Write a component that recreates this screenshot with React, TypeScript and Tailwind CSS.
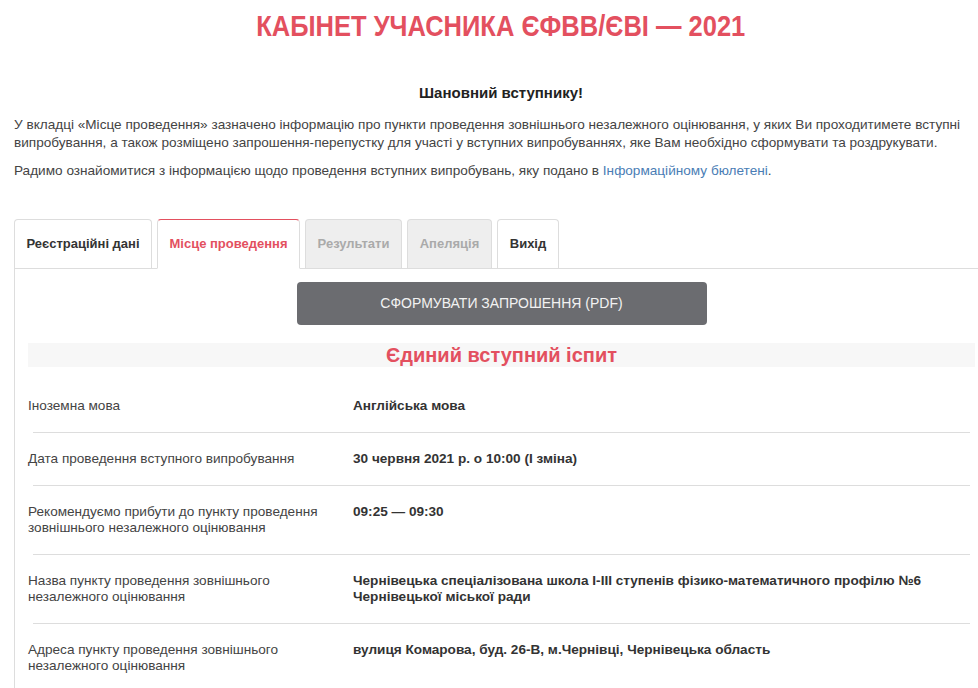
import React from "react";

const font = { fontFamily: "'Liberation Sans', Arial, sans-serif" };

const tabs = [
  { label: "Реєстраційні дані", state: "normal", w: "w-[138px]" },
  { label: "Місце проведення", state: "active", w: "w-[143px]" },
  { label: "Результати", state: "disabled", w: "w-[97px]" },
  { label: "Апеляція", state: "disabled", w: "w-[85px]" },
  { label: "Вихід", state: "normal", w: "w-[62px]" },
];

const rows: { label: string; value: string }[] = [
  { label: "Іноземна мова", value: "Англійська мова" },
  { label: "Дата проведення вступного випробування", value: "30 червня 2021 р. о 10:00 (I зміна)" },
  {
    label: "Рекомендуємо прибути до пункту проведення зовнішнього незалежного оцінювання",
    value: "09:25 — 09:30",
  },
  {
    label: "Назва пункту проведення зовнішнього незалежного оцінювання",
    value: "Чернівецька спеціалізована школа I-III ступенів фізико-математичного профілю №6 Чернівецької міської ради",
  },
  {
    label: "Адреса пункту проведення зовнішнього незалежного оцінювання",
    value: "вулиця Комарова, буд. 26-В, м.Чернівці, Чернівецька область",
  },
];

function Tab({ label, state, w }: { label: string; state: string; w: string }) {
  if (state === "active") {
    return (
      <div
        className={`${w} h-[50px] -mb-px flex items-center justify-center rounded-t-[4px] border border-[#ddd] border-t-[#e3505f] border-b-white bg-white text-[13px] font-bold text-[#e3505f]`}
      >
        {label}
      </div>
    );
  }
  if (state === "disabled") {
    return (
      <div
        className={`${w} h-[49px] flex items-center justify-center rounded-t-[4px] border border-b-0 border-[#ddd] bg-[#eee] text-[13px] font-bold text-[#aaa]`}
      >
        {label}
      </div>
    );
  }
  return (
    <div
      className={`${w} h-[49px] flex items-center justify-center rounded-t-[4px] border border-b-0 border-[#ddd] bg-white text-[13px] font-bold text-[#333]`}
    >
      {label}
    </div>
  );
}

export default function App() {
  return (
    <div className="w-[978px] h-[688px] overflow-hidden bg-white" style={font}>
      <div className="w-[988px] pl-[14px]">
        <div className="mt-[9px] flex justify-center">
          <h1 className="inline-block scale-x-[0.85] text-[30px] leading-[34px] font-bold text-[#e3505f] whitespace-nowrap">
            КАБІНЕТ УЧАСНИКА ЄФВВ/ЄВІ — 2021
          </h1>
        </div>

        <p className="mt-[40px] text-center text-[15px] leading-[20px] font-bold text-[#222]">
          Шановний вступнику!
        </p>

        <p className="mt-[13px] text-[13.6px] leading-[18px] text-[#444]">
          У вкладці «Місце проведення» зазначено інформацію про пункти проведення зовнішнього незалежного
          оцінювання, у яких Ви проходитимете вступні випробування, а також розміщено запрошення-перепустку для
          участі у вступних випробуваннях, яке Вам необхідно сформувати та роздрукувати.
        </p>
        <p className="mt-[10px] text-[13.6px] leading-[18px] text-[#444]">
          Радимо ознайомитися з інформацією щодо проведення вступних випробувань, яку подано в{" "}
          <a className="text-[#4a7db5]">Інформаційному бюлетені</a>.
        </p>

        <div className="mt-[39px] flex gap-[5px] border-b border-[#ddd]">
          {tabs.map((t) => (
            <Tab key={t.label} {...t} />
          ))}
        </div>

        <div className="border-l border-[#ddd] pl-[13px] pr-[13px] pb-[40px]">
          <div className="flex justify-center pt-[13px]">
            <button className="w-[410px] h-[43px] rounded-[4px] bg-[#6b6c70] text-[14px] text-[#f2f2f2] uppercase">
              Сформувати запрошення (PDF)
            </button>
          </div>

          <div className="mt-[18px] bg-[#f7f7f7] text-center text-[20px] leading-[24px] font-bold text-[#e3505f]">
            Єдиний вступний іспит
          </div>

          <div className="mt-[13px]">
            {rows.map((r) => (
              <div key={r.label} className="border-b border-[#ddd] mx-[5px]">
                <div className="-mx-[5px] flex py-[18px] text-[13.6px] leading-[16px]">
                  <div className="w-[325px] shrink-0 pr-[15px] text-[#444]">{r.label}</div>
                  <div className="flex-1 font-bold text-[#333]">{r.value}</div>
                </div>
              </div>
            ))}
          </div>
        </div>
      </div>
    </div>
  );
}
